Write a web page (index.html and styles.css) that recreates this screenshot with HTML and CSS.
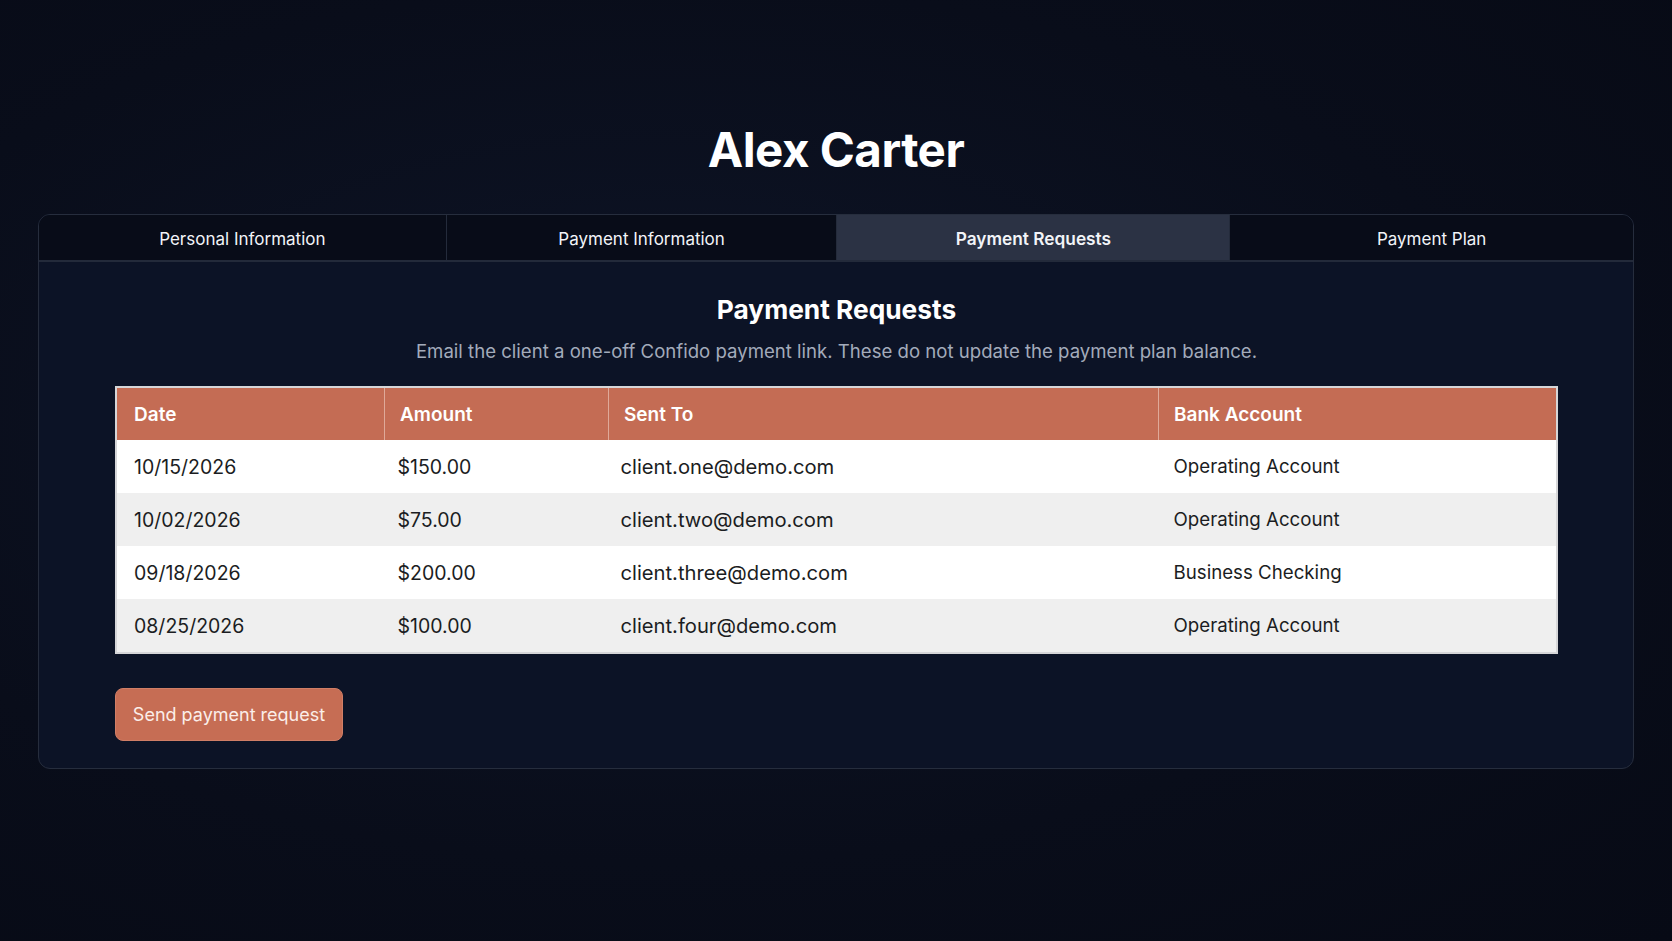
FILE: index.html
```html
<!DOCTYPE html>
<html lang="en">

<head>
    <meta charset="UTF-8">
    <title>Alex Carter</title>
    <link rel="stylesheet" href="styles.css">
</head>

<body>

    <h1 class="client-name">Alex Carter</h1>

    <main class="card">
        <nav class="tabs">
            <button class="tab">Personal Information</button>
            <button class="tab">Payment Information</button>
            <button class="tab active">Payment Requests</button>
            <button class="tab">Payment Plan</button>
        </nav>

        <section class="panel">
            <h2>Payment Requests</h2>
            <p class="intro">Email the client a one-off Confido payment link. These do not update the payment plan balance.</p>

            <table class="requests">
                <thead>
                    <tr>
                        <th class="col-date">Date</th>
                        <th class="col-amount">Amount</th>
                        <th class="col-email">Sent To</th>
                        <th>Bank Account</th>
                    </tr>
                </thead>
                <tbody>
                    <tr>
                        <td>10/15/2026</td>
                        <td>$150.00</td>
                        <td class="email">client.one@demo.com</td>
                        <td class="bank">Operating Account</td>
                    </tr>
                    <tr>
                        <td>10/02/2026</td>
                        <td>$75.00</td>
                        <td class="email">client.two@demo.com</td>
                        <td class="bank">Operating Account</td>
                    </tr>
                    <tr>
                        <td>09/18/2026</td>
                        <td>$200.00</td>
                        <td class="email">client.three@demo.com</td>
                        <td class="bank">Business Checking</td>
                    </tr>
                    <tr>
                        <td>08/25/2026</td>
                        <td>$100.00</td>
                        <td class="email">client.four@demo.com</td>
                        <td class="bank">Operating Account</td>
                    </tr>
                </tbody>
            </table>

            <button class="send-btn">Send payment request</button>
        </section>
    </main>

</body>

</html>
```

FILE: styles.css
```css
body {
    margin: 0;
    min-height: 941px;
    background: radial-gradient(ellipse at 40% 45%, #0e1528 0%, #090d1a 60%, #070a15 100%);
    font-family: "Inter", "Noto Sans", sans-serif;
    color: white;
    padding: 0 38px;
    box-sizing: border-box;
}

.client-name {
    margin: 0;
    padding-top: 122px;
    height: 92px;
    box-sizing: content-box;
    text-align: center;
    font-size: 47.5px;
    font-weight: 700;
    line-height: 56px;
    letter-spacing: -0.5px;
}

.card {
    border: 1px solid #262d3d;
    border-radius: 12px;
    background-color: #0c1326;
    overflow: hidden;
}

.tabs {
    display: grid;
    grid-template-columns: 407fr 391fr 393fr 404fr;
    border-bottom: 2px solid #232a3a;
    background-color: #080c18;
}

.tab {
    height: 45px;
    padding-top: 3px;
    border: none;
    border-left: 1px solid #242b3b;
    background: none;
    color: #f2f4f8;
    font-family: inherit;
    font-size: 17px;
}

.tab:first-child {
    border-left: none;
}

.tab.active {
    background-color: #2b3244;
    font-weight: 600;
    font-size: 17.3px;
}

.panel {
    padding: 31px 75px 27px 76px;
}

h2 {
    margin: 0;
    text-align: center;
    font-size: 26.3px;
    font-weight: 700;
    line-height: 34px;
}

.intro {
    margin: 11px 0 22px;
    text-align: center;
    color: #a3abbb;
    font-size: 18.6px;
    line-height: 26px;
}

.requests {
    width: 100%;
    border-collapse: collapse;
    border: 2px solid #d6d6d8;
    color: #1b1d22;
    font-size: 19.5px;
}

.requests th {
    height: 52px;
    padding: 0 15px;
    text-align: left;
    background-color: #c46c54;
    color: white;
    font-weight: 600;
    font-size: 19px;
    border-left: 1px solid #dfa999;
}

.requests th:first-child {
    border-left: none;
}

.col-date {
    width: 235px;
}

.col-amount {
    width: 193px;
}

.col-email {
    width: 519px;
}

.requests td {
    height: 53px;
    padding: 0 15px;
    background-color: white;
}

.requests th:first-child,
.requests td:first-child {
    padding-left: 17px;
}

.requests td:nth-child(2) {
    padding-left: 13px;
}

.requests td.email {
    padding-left: 12px;
    font-size: 20.2px;
}

.requests td.bank {
    font-size: 18.7px;
}

.requests tbody tr:nth-child(even) td {
    background-color: #efefef;
}

.send-btn {
    margin-top: 34px;
    width: 228px;
    height: 53px;
    border: 1px solid #d07e66;
    border-radius: 8px;
    background-color: #c66d54;
    color: #fbeee9;
    font-family: inherit;
    font-size: 18px;
}
```
